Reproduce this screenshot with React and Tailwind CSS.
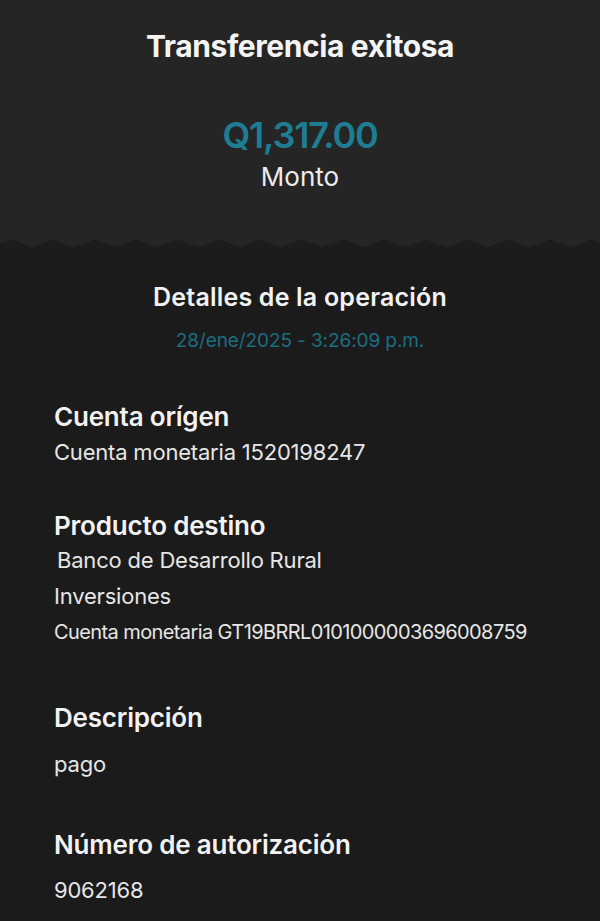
import React from 'react';

const font = { fontFamily: 'Inter, "Noto Sans", sans-serif' };

function Zigzag() {
	const period = 41.4;
	const pts = ['0,12', '0,1.5'];
	for (let x = -8.7; x < 620; x += period) {
		pts.push(`${x.toFixed(1)},8`);
		pts.push(`${(x + period / 2).toFixed(1)},0`);
	}
	pts.push('600,12');
	return (
		<svg width="600" height="12" viewBox="0 0 600 12" className="block">
			<defs>
				<filter id="sh" x="-5%" y="-50%" width="110%" height="200%">
					<feDropShadow dx="0" dy="1" stdDeviation="1.4" floodColor="#000" floodOpacity="0.6" />
				</filter>
			</defs>
			<polygon points={pts.join(' ')} fill="#1b1b1b" filter="url(#sh)" />
		</svg>
	);
}

function Section({ title, children, className = '' }) {
	return (
		<div className={className}>
			<div className="text-[26px] font-semibold text-[#f2f2f2] leading-[32px] tracking-[-0.2px]">{title}</div>
			{children}
		</div>
	);
}

const value = 'text-[22px] text-[#e6e6e6] leading-[28px] tracking-[-0.2px]';

export default function App() {
	return (
		<div className="w-[600px] h-[921px] overflow-hidden bg-[#1b1b1b]" style={font}>
			<div className="bg-[#252525] pt-[28px] pb-[48px] flex flex-col items-center">
				<h1 className="text-[30px] font-bold text-[#f4f4f4] leading-[36px] tracking-[-0.4px]">Transferencia exitosa</h1>
				<div className="mt-[50px] text-[36px] font-semibold text-[#1f7d93] leading-[42px] tracking-[-1.2px]">Q1,317.00</div>
				<div className="mt-[6px] text-[26px] text-[#ececec] leading-[30px]">Monto</div>
			</div>
			<div className="bg-[#252525]">
				<Zigzag />
			</div>
			<div className="flex flex-col">
				<div className="flex flex-col items-center pt-[29px]">
					<div className="text-[25px] font-semibold text-[#f2f2f2] leading-[32px] tracking-[0.2px]">Detalles de la operación</div>
					<div className="mt-[16px] text-[19px] text-[#1b6e82] leading-[24px] tracking-[-0.1px]">28/ene/2025 - 3:26:09 p.m.</div>
				</div>
				<div className="px-[54px] pt-[48px]">
					<Section title="Cuenta orígen">
						<div className={`mt-[5px] ${value}`}>Cuenta monetaria 1520198247</div>
					</Section>
					<Section title="Producto destino" className="mt-[44px]">
						<div className={`mt-[4px] pl-[3px] ${value}`}>Banco de Desarrollo Rural</div>
						<div className={`mt-[8px] ${value}`}>Inversiones</div>
						<div className="mt-[9px] text-[20px] text-[#e6e6e6] leading-[26px] tracking-[-0.6px]">Cuenta monetaria GT19BRRL0101000003696008759</div>
					</Section>
					<Section title="Descripción" className="mt-[57px]">
						<div className={`mt-[16px] ${value}`}>pago</div>
					</Section>
					<Section title="Número de autorización" className="mt-[51px]">
						<div className={`mt-[15px] ${value}`}>9062168</div>
					</Section>
				</div>
			</div>
		</div>
	);
}
